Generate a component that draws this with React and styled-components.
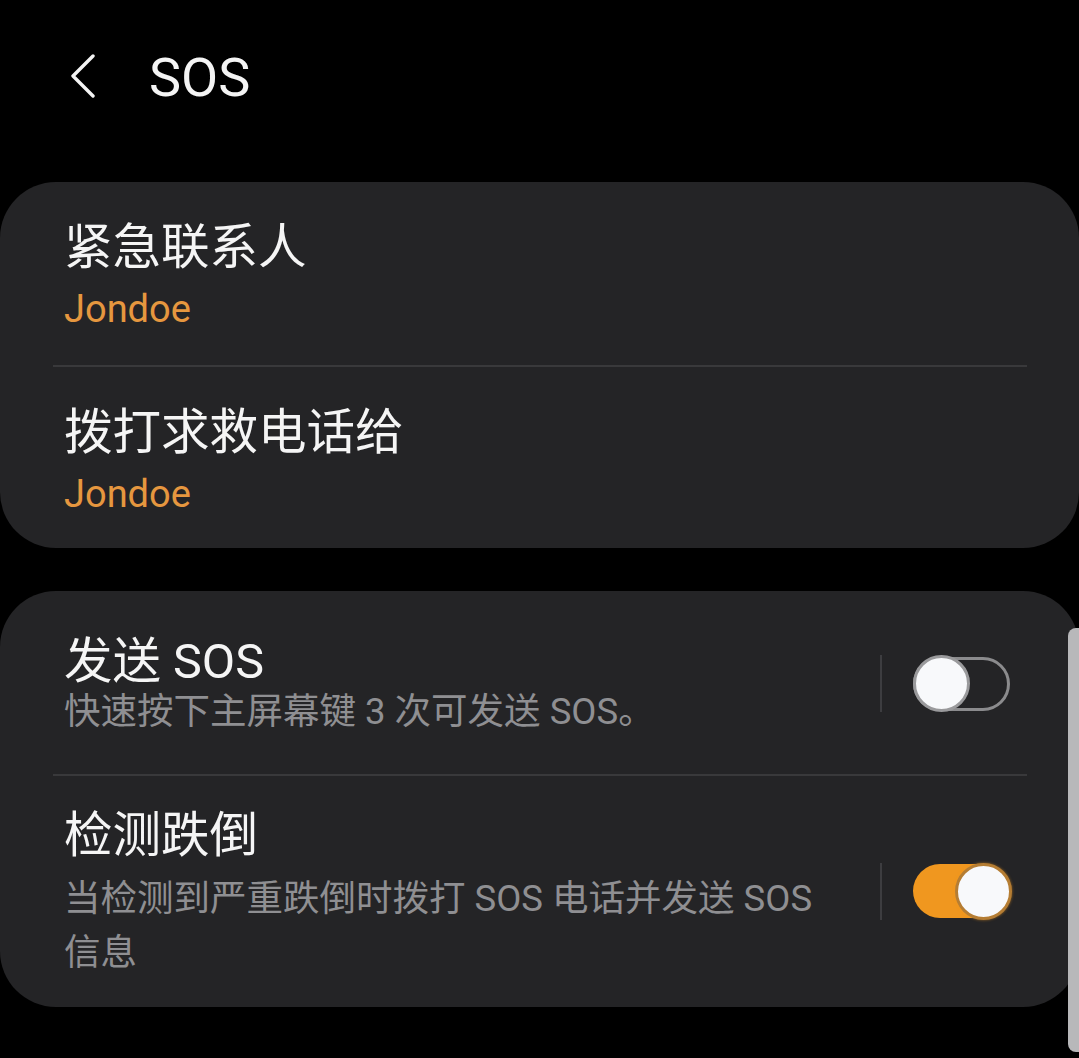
import styled, { createGlobalStyle } from "styled-components";

const GlobalStyle = createGlobalStyle`
  html, body {
    margin: 0;
    padding: 0;
    background: #000;
  }
  body {
    font-family: Roboto, "Noto Sans CJK SC", sans-serif;
    -webkit-font-smoothing: antialiased;
  }
`;

const BackIcon = () => (
  <svg width="26" height="44" viewBox="0 0 26 44" fill="none">
    <path
      d="M23 2 L3 22 L23 42"
      stroke="#f4f4f4"
      strokeWidth="3.4"
      strokeLinecap="round"
      strokeLinejoin="round"
    />
  </svg>
);

const App = () => {
  return (
    <Page>
      <GlobalStyle />
      <Header>
        <BackBtn>
          <BackIcon />
        </BackBtn>
        <Title>SOS</Title>
      </Header>

      <Card>
        <Row $pt={36} $pb={33}>
          <TextBlock $gap={8}>
            <ItemTitle $lh={60}>紧急联系人</ItemTitle>
            <Value>Jondoe</Value>
          </TextBlock>
        </Row>
        <Divider />
        <Row $pt={36} $pb={31}>
          <TextBlock $gap={8}>
            <ItemTitle $lh={60}>拨打求救电话给</ItemTitle>
            <Value>Jondoe</Value>
          </TextBlock>
        </Row>
      </Card>

      <Card>
        <Row $pt={40} $pb={38}>
          <TextBlock $gap={-5} $shift={3}>
            <ItemTitle $lh={56}>发送 SOS</ItemTitle>
            <Summary>快速按下主屏幕键 3 次可发送 SOS。</Summary>
          </TextBlock>
          <VLine />
          <Switch $on={false}>
            <Thumb $on={false} />
          </Switch>
        </Row>
        <Divider />
        <Row $pt={29} $pb={30}>
          <TextBlock $gap={8} $shift={3}>
            <ItemTitle $lh={56}>检测跌倒</ItemTitle>
            <Summary>当检测到严重跌倒时拨打 SOS 电话并发送 SOS 信息</Summary>
          </TextBlock>
          <VLine />
          <Switch $on={true}>
            <Thumb $on={true} />
          </Switch>
        </Row>
      </Card>

      <ScrollBar />
    </Page>
  );
};

const Page = styled.div`
  position: relative;
  width: 1079px;
  min-height: 1058px;
  background: #000;
  display: flex;
  flex-direction: column;
  gap: 43px;
  overflow: hidden;
`;

const Header = styled.div`
  height: 156px;
  display: flex;
  align-items: center;
  padding-left: 70px;
  margin-bottom: -17px;
`;

const BackBtn = styled.div`
  width: 26px;
  height: 44px;
  display: flex;
  align-items: center;
  margin-top: -4px;
  margin-right: 53px;
`;

const Title = styled.div`
  font-family: Roboto, sans-serif;
  font-size: 54px;
  line-height: 64px;
  color: #f4f4f4;
`;

const Card = styled.div`
  background: #242426;
  border-radius: 56px;
  padding: 0 52px 0 53px;
  display: flex;
  flex-direction: column;
`;

const Row = styled.div`
  display: flex;
  align-items: center;
  padding: ${({ $pt }) => $pt}px 17px ${({ $pb }) => $pb}px 11px;
`;

const TextBlock = styled.div`
  flex: 1;
  display: flex;
  flex-direction: column;
  gap: ${({ $gap }) => Math.max($gap, 0)}px;
  margin: ${({ $shift = 0 }) => `${$shift}px 56px ${-$shift}px 0`};
  min-width: 0;

  & > * + * {
    margin-top: ${({ $gap }) => Math.min($gap, 0)}px;
  }
`;

const ItemTitle = styled.div`
  font-size: 48.5px;
  line-height: ${({ $lh }) => $lh}px;
  color: #f5f5f5;
`;

const Value = styled.div`
  font-size: 38px;
  line-height: 46px;
  color: #e6973f;
`;

const Summary = styled.div`
  font-size: 36.5px;
  line-height: 54px;
  color: #8f8f92;
`;

const Divider = styled.div`
  height: 2px;
  background: #39393b;
`;

const VLine = styled.div`
  width: 2px;
  height: 57px;
  background: #3d3d40;
  margin-right: 31px;
`;

const Switch = styled.div`
  position: relative;
  width: 97px;
  height: 54px;
  box-sizing: border-box;
  border-radius: 27px;
  border: ${({ $on }) => ($on ? "none" : "3px solid #8b8b8d")};
  background: ${({ $on }) => ($on ? "#f0971f" : "transparent")};
`;

const Thumb = styled.div`
  position: absolute;
  top: 50%;
  ${({ $on }) => ($on ? "right: -2px;" : "left: -3px;")}
  width: 57px;
  height: 57px;
  margin-top: -28.5px;
  box-sizing: border-box;
  border-radius: 50%;
  background: #f8f9fb;
  border: 3px solid ${({ $on }) => ($on ? "#b57d33" : "#9a9a9c")};
  box-shadow: ${({ $on }) =>
    $on ? "0 0 3px rgba(240, 151, 31, 0.6)" : "none"};
`;

const ScrollBar = styled.div`
  position: absolute;
  right: 0;
  top: 628px;
  width: 11px;
  height: 424px;
  background: #b8b8ba;
  border-radius: 8px 0 0 8px;
`;

export default App;
